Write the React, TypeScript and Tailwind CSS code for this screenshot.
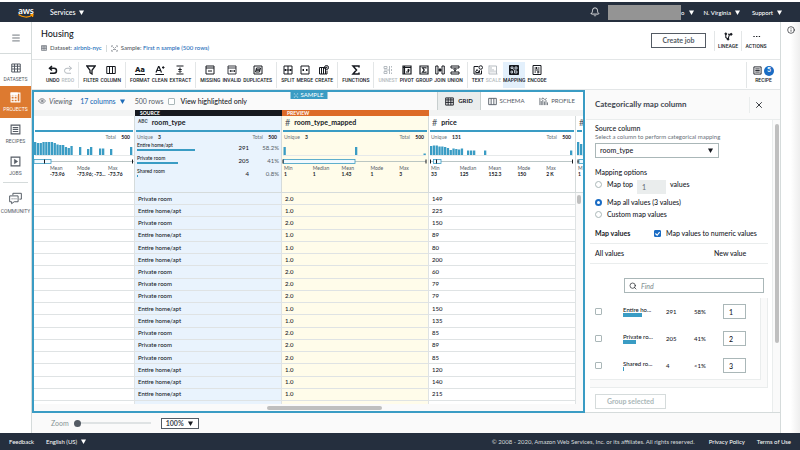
import type { ReactNode } from "react";
import { Bell, Eye, Info, Menu, Search, X } from "lucide-react";

interface IconProps {
  className?: string;
  children: ReactNode;
}

function Icon({ className = "size-[10px]", children }: IconProps) {
  return (
    <svg viewBox="0 0 20 20" fill="none" stroke="currentColor" strokeWidth="2" className={`${className} shrink-0`}>
      {children}
    </svg>
  );
}

function Caret({ className = "" }: { className?: string }) {
  return (
    <svg viewBox="0 0 10 10" className={`size-[5px] shrink-0 ${className}`} fill="currentColor">
      <path d="M0 1h10L5 10z" />
    </svg>
  );
}

const icons = {
  undo: <path d="M8 2 3 6.500l5 4.500M3 6.500h9a5 5 0 0 1 0 10H4" strokeWidth="3" />,
  redo: <path d="m12 2 5 4.500-5 4.500M17 6.500H8a5 5 0 0 0 0 10h8" />,
  filter: <path d="M1.500 2h17L12 10.500V18l-4-2.500v-5z" strokeWidth="2.600" />,
  column: <path d="M1.500 3h17v14h-17zM7 3v14M13 3v14" />,
  clean: <path d="M2 15 7 3h1l5 12M4 11h7M14 5h5M16.500 2.500v5M1 19h17" strokeWidth="2.400" />,
  extract: <path d="M3 2h14M3 18h14M10 5v9M6.500 9h7M7 12l3 3 3-3" />,
  missing: <path d="M2 2h16v16H2zM2 6h16M6 12h8" />,
  invalid: <path d="M2 2h16v16H2zM2 6h16M6 10l3 4M9 10l-3 4M12 10v4M15 10v4" strokeWidth="1.700" />,
  duplicates: <path d="M2 2h16v16H2zM7 6h8l-1 4H6zM6 10h8l-1 4H5z" />,
  split: <path d="M2 2h16v16H2zM10 2v16M2 10h16M5 8v4M15 8v4" />,
  merge: <path d="M2 2h16v16H2zM4 10h4M12 10h4M7 8v4M13 8v4" />,
  create: (
    <>
      <path d="M1 5h12v13H1zM5 5v13M9 5v13M13 12v6h3v-7" />
      <circle cx="15" cy="5" r="4" />
      <path d="M15 3v4M13 5h4" strokeWidth="1.400" />
    </>
  ),
  functions: <path d="M16 5V2H4l7 8-7 8h12v-3" strokeWidth="3" />,
  unnest: <path d="M2 3h6v4H2zM2 13h6v4H2zM2 10h11M13 2v16M17 2v3M17 8v4M17 15v3" />,
  pivot: <path d="M2 2h16v16H2zM2 5h16M5 2v16M8 14h5V9M11 11l2-2 2 2" strokeWidth="2.400" />,
  group: <path d="M2 2h16v16H2zM14 7V5.500H7L10.500 10 7 14.500h7V13" strokeWidth="2.400" />,
  join: <path d="M1.500 2H6v16H1.500zM14 2h4.500v16H14zM6 10h8M9 7v6M11 7v6" />,
  union: <path d="M2 2h16v4H2zM2 14h16v4H2zM10 6v8M7 9l3 2 3-2" />,
  text: (
    <>
      <path d="M11 3H2v15h15v-7M5 14l3-5 3 4 2-2v4H5" />
      <circle cx="15.500" cy="5" r="3.500" />
    </>
  ),
  scale: <path d="M2 1v17h17M6 15V4M10 15V8M14 15v-4M2 2h15v16" />,
  mapping: (
    <>
      <path d="M1 1h18v18H1z" fill="currentColor" />
      <path d="M4 4h4v3H4zM12 4h4v4h-4zM4 12h3v4H4zM11 12h5v4h-5zM8 7l4 5" stroke="#e9f3fd" strokeWidth="1.500" />
    </>
  ),
  encode: <path d="M2 1h16v18H2zM5 6h3M11 6h4M5 10h10M5 14h3M11 14h4M9 4v4M12 12v5" />,
  table: <path d="M1.500 2h17v16h-17zM1.500 6.500h17M1.500 12h17M7 2v16M13 2v16" />,
  projects: (
    <>
      <path d="M2 2h16v16H2zM2 7.500h11M2 13h11M7.500 2v16M13 2v16" />
      <path d="M2 2h11v3H2z" fill="currentColor" />
    </>
  ),
  list: <path d="M2 2h16v16H2zM5 6.500h10M5 10h10M5 13.500h10" />,
  jobs: (
    <>
      <path d="M2 2h16v16H2z" />
      <path d="m8 6 6 4-6 4z" fill="currentColor" strokeWidth="1" />
    </>
  ),
  community: <path d="M6 5V2h13v9h-3M1 6h13v9H8l-4 3v-3H1zM4 10.500h1.500M7 10.500h1.500M10 10.500h1.500" strokeWidth="1.500" />,
  sample: <path d="M2 6V2h3M2 14v4h3M18 6V2h-3M18 14v4h-3M5 5l4 4M15 5l-4 4M5 15l4-4M15 15l-4-4M8 13h4" strokeWidth="1.600" />,
  lineage: (
    <>
      <path d="M4 5v7l5 4 3-10h4" strokeWidth="2.400" />
      <circle cx="4" cy="4" r="2" fill="currentColor" />
      <circle cx="16" cy="5" r="2" fill="currentColor" />
      <circle cx="9" cy="16" r="2" fill="currentColor" />
      <circle cx="11" cy="5" r="1" fill="currentColor" />
    </>
  ),
  profile: <path d="M2 2v16M5 18V9M8.500 18V6M12 18v-8M15.500 18V7M19 18v-6M5 5l4-3 4 4 4-3" strokeWidth="1.800" />,
};

type Tool = { label: string; icon: ReactNode; disabled?: boolean; active?: boolean };

const toolGroups: Tool[][] = [
  [
    { label: "UNDO", icon: <Icon>{icons.undo}</Icon> },
    { label: "REDO", icon: <Icon>{icons.redo}</Icon>, disabled: true },
  ],
  [
    { label: "FILTER", icon: <Icon>{icons.filter}</Icon> },
    { label: "COLUMN", icon: <Icon>{icons.column}</Icon> },
  ],
  [
    { label: "FORMAT", icon: <span className="border-b border-current text-[8px] leading-[9px] font-black">Aa</span> },
    { label: "CLEAN", icon: <Icon>{icons.clean}</Icon> },
    { label: "EXTRACT", icon: <Icon>{icons.extract}</Icon> },
  ],
  [
    { label: "MISSING", icon: <Icon>{icons.missing}</Icon> },
    { label: "INVALID", icon: <Icon>{icons.invalid}</Icon> },
    { label: "DUPLICATES", icon: <Icon>{icons.duplicates}</Icon> },
  ],
  [
    { label: "SPLIT", icon: <Icon>{icons.split}</Icon> },
    { label: "MERGE", icon: <Icon>{icons.merge}</Icon> },
    { label: "CREATE", icon: <Icon>{icons.create}</Icon> },
  ],
  [{ label: "FUNCTIONS", icon: <Icon>{icons.functions}</Icon> }],
  [
    { label: "UNNEST", icon: <Icon>{icons.unnest}</Icon>, disabled: true },
    { label: "PIVOT", icon: <Icon>{icons.pivot}</Icon> },
    { label: "GROUP", icon: <Icon>{icons.group}</Icon> },
    { label: "JOIN", icon: <Icon>{icons.join}</Icon> },
    { label: "UNION", icon: <Icon>{icons.union}</Icon> },
  ],
  [
    { label: "TEXT", icon: <Icon>{icons.text}</Icon> },
    { label: "SCALE", icon: <Icon>{icons.scale}</Icon>, disabled: true },
    { label: "MAPPING", icon: <Icon>{icons.mapping}</Icon>, active: true },
    { label: "ENCODE", icon: <Icon>{icons.encode}</Icon> },
  ],
];

const rows = [
  ["Private room", "2.0", "149"],
  ["Entire home/apt", "1.0", "225"],
  ["Private room", "2.0", "150"],
  ["Entire home/apt", "1.0", "89"],
  ["Entire home/apt", "1.0", "80"],
  ["Entire home/apt", "1.0", "200"],
  ["Private room", "2.0", "60"],
  ["Private room", "2.0", "79"],
  ["Private room", "2.0", "79"],
  ["Entire home/apt", "1.0", "150"],
  ["Entire home/apt", "1.0", "135"],
  ["Private room", "2.0", "85"],
  ["Private room", "2.0", "89"],
  ["Private room", "2.0", "85"],
  ["Entire home/apt", "1.0", "120"],
  ["Entire home/apt", "1.0", "140"],
  ["Entire home/apt", "1.0", "215"],
];

// [x, height] pairs, drawn up from the baseline
const longitudeBars = [
  [0, 13], [2.8, 12], [5.600, 12], [8.400, 13], [11.200, 13], [14, 13], [16.800, 13], [19.600, 12], [22.400, 10.500],
  [25.200, 10], [28, 10], [30.800, 8], [33.600, 7], [36.400, 9], [45, 8], [53, 6], [56, 8], [65, 6.500], [68, 6.500], [76, 6], [96, 8],
];
const mappedBars = [[1.500, 8], [73, 8], [141.500, 1.500]];
const priceBars = [
  [1, 9], [3.800, 9.500], [6.600, 9.500], [9.400, 8.500], [12.200, 8.500], [15, 8], [17.800, 7], [20.600, 5], [23.400, 6.500],
  [26.200, 6], [29, 5.500], [31.800, 6.500], [38, 4.500], [41, 4.500], [44, 4.500], [55, 4.500], [141, 4.500],
];

interface NumericSummaryProps {
  unique?: string;
  total?: string;
  bars: number[][];
  box: [number, number];
  ticks: number[];
  stats: string[][];
  statsClass?: string;
}

function NumericSummary({ unique, total, bars, box, ticks, stats, statsClass = "grid-cols-5 pl-[2px]" }: NumericSummaryProps) {
  return (
    <>
      <div className="flex h-2 items-center justify-between pt-px pr-1 pl-[2px] text-[5px] leading-[8px] whitespace-nowrap text-[#687078]">
        <span>{unique && <>Unique <b className="ml-1 text-[#16191f]">{unique}</b></>}</span>
        {total && <span>Total <b className="ml-1 text-[#16191f]">{total}</b></span>}
      </div>
      <svg viewBox="0 0 146 25" className="block h-[25px] w-[146px] max-w-none">
        <path d="M1 15.500h143" stroke="#e6e9ea" />
        {bars.map(([x, h]) => (
          <rect key={x} x={x} y={15 - h} width="2.300" height={h} fill="#3a9cc4" />
        ))}
        <path d="M1 21.500h143" stroke="#aab7b8" strokeWidth="0.800" />
        <rect x={box[0]} y="19.500" width={box[1] - box[0]} height="4" fill="#f1f9fe" stroke="#3a9cc4" strokeWidth="0.800" />
        {ticks.map((x) => (
          <path key={x} d={`M${x} 19.500v4`} stroke="#16191f" />
        ))}
      </svg>
      <div className={`grid text-[5px] leading-[6px] ${statsClass}`}>
        {stats.map(([name, value]) => (
          <div key={name} className="whitespace-nowrap">
            <div className="text-[#545b64]">{name}</div>
            <div className="font-bold text-[#16191f]">{value}</div>
          </div>
        ))}
      </div>
    </>
  );
}

function ColumnTitle({ type, name }: { type?: string; name?: string }) {
  return (
    <>
      <div className="flex h-[14px] items-center gap-1 px-[3px] pb-[2px] whitespace-nowrap">
        {type === "#" && <span className="text-[9px] leading-none font-normal text-[#545b64]">#</span>}
        {type === "ABC" && <span className="font-['Roboto',sans-serif] text-[5px] font-bold text-[#545b64]">ABC</span>}
        <span className="text-[7px] leading-none font-bold">{name}</span>
      </div>
      <div className="mx-px h-[2px] bg-[#3a9cc4]" />
    </>
  );
}

const categories = [
  { name: "Entire home/apt", short: "Entire ho...", count: 291, pct: "58.2%", rounded: "58%", bar: "w-[58px]", smallBar: "w-[19px]" },
  { name: "Private room", short: "Private ro...", count: 205, pct: "41%", rounded: "41%", bar: "w-[41px]", smallBar: "w-[13px]" },
  { name: "Shared room", short: "Shared ro...", count: 4, pct: "0.8%", rounded: "<1%", bar: "w-px", smallBar: "w-px" },
];

function CategorySummary() {
  return (
    <div className="px-[2px] text-[5px] leading-[8px]">
      <div className="flex h-[9px] items-center justify-between pt-px pr-[2px] text-[#687078]">
        <span>Unique <b className="ml-1 text-[#16191f]">3</b></span>
        <span>Total <b className="ml-1 text-[#16191f]">500</b></span>
      </div>
      {categories.map((c) => (
        <div key={c.name} className="flex h-[13px] items-start text-[6px]">
          <div className="flex-1">
            <div className="text-[5px] leading-[8px] font-medium">{c.name}</div>
            <div className={`h-[2px] bg-[#3a9cc4] ${c.bar}`} />
          </div>
          <span className="w-6 pt-[3px] text-right font-medium">{c.count}</span>
          <span className="w-[30px] pt-[3px] text-right text-[#545b64]">{c.pct}</span>
        </div>
      ))}
    </div>
  );
}

const headCell = "h-[77px] overflow-hidden border-r border-b border-[#d5dbdb] p-0 text-left align-top font-normal";
const bodyCell = "overflow-hidden border-r border-b border-[#dfe3e4] px-[3px] py-0 text-[6px] leading-[8px] font-medium whitespace-nowrap";

function DataGrid() {
  return (
    <table className="h-full w-full table-fixed border-separate border-spacing-0">
      <colgroup>
        <col />
        <col className="w-[147px]" />
        <col className="w-[147px]" />
        <col className="w-[147px]" />
        <col className="w-[7px]" />
      </colgroup>
      <thead>
        <tr className="text-left text-[5px] leading-[6px] text-white">
          <th className="h-[6px] bg-[#f2f3f3] p-0" />
          <th className="bg-[#16191f] p-0 pl-[5px]">SOURCE</th>
          <th className="bg-[#dd6b27] p-0 pl-[5px]">PREVIEW</th>
          <th className="bg-[#f2f3f3] p-0" />
          <th className="bg-[#f2f3f3] p-0" />
        </tr>
        <tr>
          <th className={headCell}>
            <ColumnTitle />
            <NumericSummary
              total="500"
              bars={longitudeBars}
              box={[0, 17]}
              ticks={[10.500, 98.500]}
              stats={[["Mean", "-73.96"], ["Mode", "-73.96; -73..."], ["Max", "-73.76"]]}
              statsClass="grid-cols-[27px_31px_27px] pl-4"
            />
          </th>
          <th className={`${headCell} bg-[#e9f3fd]`}>
            <ColumnTitle type="ABC" name="room_type" />
            <CategorySummary />
          </th>
          <th className={`${headCell} bg-[#fffcea]`}>
            <ColumnTitle type="#" name="room_type_mapped" />
            <NumericSummary
              unique="3"
              total="500"
              bars={mappedBars}
              box={[1.500, 73]}
              ticks={[1, 144]}
              stats={[["Min", "1"], ["Median", "1"], ["Mean", "1.43"], ["Mode", "1"], ["Max", "3"]]}
            />
          </th>
          <th className={headCell}>
            <ColumnTitle type="#" name="price" />
            <NumericSummary
              unique="131"
              total="500"
              bars={priceBars}
              box={[4.500, 12]}
              ticks={[1.500, 7.500, 143.500]}
              stats={[["Min", "33"], ["Median", "125"], ["Mean", "152.3"], ["Mode", "150"], ["Max", "2 K"]]}
            />
          </th>
          <th className="overflow-hidden border-b border-[#d5dbdb] p-0 text-left align-top font-normal">
            <ColumnTitle type="#" />
            <NumericSummary bars={[[1, 13], [4, 11]]} box={[3, 12]} ticks={[2]} stats={[["M", "1"]]} />
          </th>
        </tr>
      </thead>
      <tbody>
        {rows.map(([type, mapped, price], i) => (
          <tr key={i}>
            <td className={bodyCell} />
            <td className={`${bodyCell} bg-[#e9f3fd]`}>{type}</td>
            <td className={`${bodyCell} bg-[#fffcea]`}>{mapped}</td>
            <td className={bodyCell}>{price}</td>
            <td className="bg-[#fafafa] p-0">
              {i === 0 && <div className="ml-px h-[9px] w-1 rounded-full bg-[#bfbfbf]" />}
            </td>
          </tr>
        ))}
        <tr>
          <td className="h-[3px] border-r border-[#dfe3e4] p-0" />
          <td className="border-r border-[#dfe3e4] bg-[#e9f3fd] p-0" />
          <td className="border-r border-[#dfe3e4] bg-[#fffcea] p-0" />
          <td className="border-r border-[#dfe3e4] p-0" />
          <td className="bg-[#fafafa] p-0" />
        </tr>
      </tbody>
    </table>
  );
}

function TopNav() {
  return (
    <nav className="mt-[2px] flex h-5 shrink-0 items-center bg-[#252f3e] text-[7px] font-medium text-white">
      <a href="#" aria-label="aws" className="ml-[18px] flex w-4 flex-col items-center">
        <span className="text-[9px] leading-[7px] font-bold">aws</span>
        <svg viewBox="0 0 32 8" className="h-1 w-4" fill="none" stroke="#ff9900" strokeWidth="2.500">
          <path d="M1 1c8 6 20 7 28 1M25 1h5l-1 5" />
        </svg>
      </a>
      <button className="ml-4 flex items-center gap-1">Services <Caret /></button>
      <div className="ml-auto flex items-center pr-[18px] text-[6px]">
        <Bell className="mr-2 size-[10px]" />
        <div className="h-[15px] w-[73px] bg-[#949494]" />
        <button className="flex items-center gap-1" aria-label="Account">o <Caret /></button>
        <button className="ml-[10px] flex items-center gap-1">N. Virginia <Caret /></button>
        <button className="ml-3 flex items-center gap-1">Support <Caret /></button>
      </div>
    </nav>
  );
}

const sideItem = "flex h-8 w-full flex-col items-center justify-center gap-1";

function Sidebar() {
  return (
    <aside className="flex w-8 shrink-0 flex-col border-r border-[#d5dbdb] bg-white font-['Roboto',sans-serif] text-[5px] leading-[5px] text-[#545b64]">
      <button aria-label="Menu" className="flex h-8 items-center justify-center border-b border-[#d5dbdb]">
        <Menu className="size-[10px]" />
      </button>
      <a href="#" className={`${sideItem} pt-1`}><Icon>{icons.table}</Icon>DATASETS</a>
      <a href="#" className={`${sideItem} bg-[#dd7a30] text-white`}><Icon className="size-[11px]">{icons.projects}</Icon>PROJECTS</a>
      <a href="#" className={sideItem}><Icon className="size-[11px]">{icons.list}</Icon>RECIPES</a>
      <a href="#" className={sideItem}><Icon className="size-[11px]">{icons.jobs}</Icon>JOBS</a>
      <div className="mx-[3px] mb-1 border-t border-[#d5dbdb]" />
      <a href="#" className={sideItem}><Icon className="size-[13px]">{icons.community}</Icon>COMMUNITY</a>
    </aside>
  );
}

function ProjectHeader() {
  return (
    <header className="flex h-[38px] shrink-0 items-center border-b border-[#e3e6e7] pr-[10px] pl-[9px]">
      <div>
        <h1 className="text-[9px] leading-[12px] font-medium">Housing</h1>
        <div className="mt-[3px] flex items-center gap-[3px] text-[6px] leading-[10px] font-medium text-[#545b64]">
          <Icon className="size-[6px]">{icons.table}</Icon>
          <span>Dataset: <a href="#" className="text-[#1c6bb8]">airbnb-nyc</a></span>
          <span className="mx-px h-[7px] border-l border-[#d5dbdb]" />
          <Icon className="size-[7px]">{icons.sample}</Icon>
          <span>Sample: <a href="#" className="text-[#1c6bb8]">First n sample (500 rows)</a></span>
        </div>
      </div>
      <button className="ml-auto h-[15px] w-[55px] border border-[#545b64] text-[7px] leading-none font-bold text-[#545b64]">Create job</button>
      <div className="ml-2 flex h-5 font-['Roboto',sans-serif] text-[5px] leading-[5px] font-medium">
        <button className="flex w-7 flex-col items-center justify-center gap-[3px] border-x border-[#e3e6e7]">
          <Icon className="size-[9px]">{icons.lineage}</Icon>LINEAGE
        </button>
        <button className="flex w-7 flex-col items-center justify-center gap-[3px]">
          <Icon className="size-[9px]"><path d="M3 10h3M9 10h3M15 10h3" strokeWidth="2.500" /></Icon>ACTIONS
        </button>
      </div>
    </header>
  );
}

function Toolbar() {
  return (
    <div className="flex h-[30px] shrink-0 items-center border-b border-[#e3e6e7] pl-[10px] font-['Roboto',sans-serif] text-[5px] leading-[5px] font-medium">
      {toolGroups.map((group, i) => (
        <div key={i} className="flex h-[26px] gap-[2px] border-l border-[#e3e6e7] px-1 first:border-l-0">
          {group.map((tool) => (
            <button
              key={tool.label}
              disabled={tool.disabled}
              className={`flex flex-col items-center justify-center gap-[3px] pb-px disabled:text-[#b5bbc0] ${tool.active ? "bg-[#e3f0fc]" : ""}`}
            >
              {tool.icon}
              {tool.label}
            </button>
          ))}
        </div>
      ))}
      <button className="ml-auto flex h-[26px] w-[34px] flex-col items-center justify-center gap-[2px] border-l border-[#e3e6e7] pb-px">
        <span className="flex items-center gap-[2px]">
          <Icon className="size-[9px]">{icons.list}</Icon>
          <span className="flex size-[10px] items-center justify-center rounded-full bg-[#1a6cc4] text-[7px] text-white">5</span>
        </span>
        RECIPE
      </button>
    </div>
  );
}

const checkboxClass =
  "size-[7px] shrink-0 appearance-none rounded-[1px] border border-[#aab7b8] bg-white checked:border-[#1a6cc4] checked:bg-[#1a6cc4]";
const radioClass =
  "size-[7px] shrink-0 appearance-none rounded-full border border-[#aab7b8] bg-white checked:border-2 checked:border-[#1a6cc4]";

function GridPanel() {
  return (
    <section className="relative flex min-w-0 flex-1 flex-col border-2 border-[#3a9cc4] bg-white">
      <div className="absolute -top-px left-1/2 flex h-2 w-[37px] -translate-x-1/2 items-center justify-center gap-[2px] bg-[#3a9cc4] text-[6px] leading-none text-white">
        <Icon className="size-[5px]">{icons.sample}</Icon>SAMPLE
      </div>
      <div className="flex h-[18px] shrink-0 items-center bg-[#fafafa] pl-1 text-[7px] text-[#545b64]">
        <Eye className="mr-[3px] size-2" />
        <i>Viewing</i>
        <button className="ml-2 flex items-center gap-1 font-medium text-[#1c6bb8]">17 columns <Caret /></button>
        <span className="mr-[5px] ml-[10px]">500 rows</span>
        <label className="flex items-center gap-[5px] font-medium text-[#16191f]">
          <input type="checkbox" className={checkboxClass} />
          View highlighted only
        </label>
        <div className="ml-auto flex h-full items-stretch text-[6px] leading-none">
          <button className="flex w-11 items-center justify-center gap-1 border-x border-[#c8cfcf] bg-[#eaeded] font-bold text-[#16191f]">
            <Icon className="size-[9px]">{icons.table}</Icon>GRID
          </button>
          <button className="flex w-[50px] items-center justify-center gap-[3px] bg-white"><Icon className="size-[9px]">{icons.column}</Icon>SCHEMA</button>
          <button className="flex w-[52px] items-center justify-center gap-[3px] bg-white"><Icon className="size-[9px]">{icons.profile}</Icon>PROFILE</button>
        </div>
      </div>
      <div className="min-h-0 flex-1">
        <DataGrid />
      </div>
      <div className="h-[7px] shrink-0 bg-[#fafafa] pt-[2px]">
        <div className="mx-auto h-1 w-[115px] translate-x-4 rounded-full bg-[#bfbfbf]" />
      </div>
    </section>
  );
}

function MappingPanel() {
  return (
    <section className="flex w-[195px] shrink-0 flex-col border-b border-[#d5dbdb] pl-px text-[7px] leading-[9px]">
      <div className="flex h-[30px] shrink-0 items-center border-b border-[#eaeded] bg-[#fafafa] pr-4 pl-[9px]">
        <h2 className="text-[8px] font-bold text-[#414750]">Categorically map column</h2>
        <button aria-label="Close" className="ml-auto flex h-4 w-[15px] items-center justify-end border-l border-[#eaeded]">
          <X className="size-[10px]" strokeWidth={2} />
        </button>
      </div>
      <div className="flex min-h-0 flex-1">
        <div className="min-w-0 flex-1 px-1 font-medium">
          <div className="px-[5px] pt-1">
            <label htmlFor="source" className="block">Source column</label>
            <p className="text-[6px] leading-[8px] font-normal text-[#687078]">Select a column to perform categorical mapping</p>
            <div className="relative mt-[2px] w-[124px]">
              <select id="source" className="block h-[15px] w-full appearance-none border border-[#aab7b8] bg-white pl-1 text-[7px] leading-none">
                <option>room_type</option>
              </select>
              <Caret className="pointer-events-none absolute top-[5px] right-[6px]" />
            </div>
            <fieldset className="pt-[10px]">
              <legend className="float-left w-full">Mapping options</legend>
              <div className="clear-both flex h-[15px] items-center gap-1">
                <label className="flex items-center gap-[5px]"><input type="radio" name="mode" className={radioClass} />Map top</label>
                <input aria-label="Number of values" disabled defaultValue="1" className="mt-1 h-[14px] w-[29px] bg-[#eaeded] pl-[5px] text-[#687078]" />
                <span>values</span>
              </div>
              <label className="mt-1 flex h-3 items-center gap-[5px]"><input type="radio" name="mode" defaultChecked className={radioClass} />Map all values (3 values)</label>
              <label className="flex h-3 items-center gap-[5px]"><input type="radio" name="mode" className={radioClass} />Custom map values</label>
            </fieldset>
          </div>
          <div className="mt-2 flex h-4 items-center border-b border-[#eaeded] px-[5px] pb-1">
            <span className="w-[59px] font-bold">Map values</span>
            <label className="flex items-center gap-[5px]">
              <span className="relative flex">
                <input type="checkbox" defaultChecked className={checkboxClass} />
                <svg viewBox="0 0 10 10" className="pointer-events-none absolute inset-0 size-[7px]" fill="none" stroke="white" strokeWidth="1.600"><path d="M2 5l2.500 2.500L8 3" /></svg>
              </span>
              Map values to numeric values
            </label>
          </div>
          <div className="flex h-5 items-center border-b border-[#eaeded] px-[5px]">
            <span className="w-[119px]">All values</span>
            <span>New value</span>
          </div>
          <div className="relative mt-[14px] mr-1 ml-[34px]">
            <Search className="absolute top-1 left-[5px] size-2" />
            <input aria-label="Find" placeholder="Find" className="block h-[15px] w-full border border-[#aab7b8] pl-4 placeholder:text-[#879596] placeholder:italic" />
          </div>
          <div className="mt-[5px] border-r border-b border-[#eaeded] bg-[#fafafa] pr-[6px] pb-[7px]">
            <ul className="border-r border-b border-[#eaeded] bg-white">
              {categories.map((c, i) => (
                <li key={c.name} className="flex h-[27px] items-center pl-[5px]">
                  <input type="checkbox" aria-label={c.name} className={checkboxClass} />
                  <div className="ml-[21px] w-[43px] text-[6px] leading-[7px]">
                    {c.short}
                    <div className={`h-1 bg-[#3a9cc4] ${c.smallBar}`} />
                  </div>
                  <span className="w-[28px] text-[6px]">{c.count}</span>
                  <span className="w-[29px] text-[6px]">{c.rounded}</span>
                  <input aria-label={`New value for ${c.name}`} defaultValue={i + 1} className="h-[15px] w-[23px] border border-[#aab7b8] pl-[5px]" />
                </li>
              ))}
            </ul>
          </div>
          <button disabled className="mt-[6px] ml-[5px] h-[15px] w-[71px] border border-[#d5dbdb] text-[7px] leading-none font-bold text-[#aab7b8]">Group selected</button>
        </div>
        <div className="w-2 shrink-0 border-l border-[#eaeded] bg-[#fafafa] pt-1">
          <div className="mx-auto h-[219px] w-1 rounded-full bg-[#bfbfbf]" />
        </div>
      </div>
    </section>
  );
}

function ZoomBar() {
  return (
    <div className="flex h-5 shrink-0 items-center bg-[#fafafa] pl-[19px] text-[7px]">
      <label htmlFor="zoom" className="text-[#879596]">Zoom</label>
      <input
        id="zoom"
        type="range"
        defaultValue={0}
        className="ml-[5px] h-[2px] w-[77px] appearance-none bg-[#dfe3e4] [&::-webkit-slider-thumb]:size-[7px] [&::-webkit-slider-thumb]:appearance-none [&::-webkit-slider-thumb]:rounded-full [&::-webkit-slider-thumb]:bg-[#545b64]"
      />
      <div className="relative ml-[10px]">
        <select aria-label="Zoom level" className="block h-[11px] w-[38px] appearance-none border border-[#545b64] bg-white pl-1 text-[7px] leading-none font-bold text-[#414750]">
          <option>100%</option>
        </select>
        <Caret className="pointer-events-none absolute top-[3px] right-[6px]" />
      </div>
    </div>
  );
}

export default function App() {
  return (
    <div className="flex h-screen flex-col overflow-hidden bg-white font-['Lato',sans-serif] text-[#16191f]">
      <TopNav />
      <div className="flex min-h-0 flex-1">
        <Sidebar />
        <main className="flex min-w-0 flex-1 flex-col">
          <ProjectHeader />
          <Toolbar />
          <div className="flex min-h-0 flex-1">
            <GridPanel />
            <MappingPanel />
          </div>
          <ZoomBar />
        </main>
        <aside className="w-5 shrink-0 border-l border-[#d5dbdb] bg-linear-to-r from-white from-50% to-[#eeeeee]">
          <button aria-label="Info" className="mx-auto mt-1 block"><Info className="size-2" /></button>
        </aside>
      </div>
      <footer className="flex h-[17px] shrink-0 items-center bg-[#252f3e] px-[9px] text-[6px] text-white">
        <a href="#">Feedback</a>
        <button className="ml-3 flex items-center gap-1">English (US) <Caret /></button>
        <span className="ml-auto text-[#d5dbdb]">© 2008 - 2020, Amazon Web Services, Inc. or its affiliates. All rights reserved.</span>
        <a href="#" className="ml-[14px]">Privacy Policy</a>
        <a href="#" className="ml-3">Terms of Use</a>
      </footer>
    </div>
  );
}
